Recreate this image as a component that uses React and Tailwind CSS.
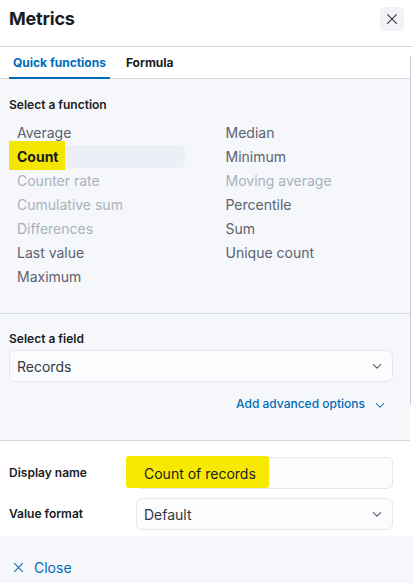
import React from 'react';

const FUNCS = [
    [{ label: 'Average' }, { label: 'Median' }],
    [{ label: 'Count', active: true }, { label: 'Minimum' }],
    [{ label: 'Counter rate', disabled: true }, { label: 'Moving average', disabled: true }],
    [{ label: 'Cumulative sum', disabled: true }, { label: 'Percentile' }],
    [{ label: 'Differences', disabled: true }, { label: 'Sum' }],
    [{ label: 'Last value' }, { label: 'Unique count' }],
    [{ label: 'Maximum' }, null],
];

const Chevron = ({ className = '' }) => (
    <svg width="12" height="12" viewBox="0 0 16 16" className={className} fill="none">
        <path d="M3 6l5 5 5-5" stroke="currentColor" strokeWidth="1.4" strokeLinecap="round" strokeLinejoin="round" />
    </svg>
);

const Cross = ({ size = 14, className = '' }) => (
    <svg width={size} height={size} viewBox="0 0 16 16" className={className} fill="none">
        <path d="M3 3l10 10M13 3L3 13" stroke="currentColor" strokeWidth="1.3" strokeLinecap="round" />
    </svg>
);

const FuncItem = ({ item }) => {
    if (!item) return <div className="h-6" />;
    if (item.active) {
        return (
            <div className="relative h-6 flex items-center">
                <div className="absolute left-0 top-[1px] w-[176px] h-[23px] rounded-md bg-[#eceff5]" />
                <div className="absolute left-0 top-[-3px] w-[56px] h-[29px] bg-[#f3e600]" />
                <span className="relative pl-2 text-[14px] font-bold text-[#1a1c21]">{item.label}</span>
            </div>
        );
    }
    return (
        <div className="h-6 flex items-center">
            <span className={`pl-2 text-[14px] ${item.disabled ? 'text-[#a9b1be]' : 'text-[#5c6270]'}`}>
                {item.label}
            </span>
        </div>
    );
};

const App = () => {
    return (
        <div className="w-[413px] h-[583px] bg-white flex flex-col overflow-hidden" style={{ fontFamily: 'Inter, "Noto Sans", sans-serif' }}>
            {/* header */}
            <div className="h-[47px] shrink-0 flex items-center justify-between pl-[9px] pr-[9px] border-b border-[#d3dae6]">
                <h2 className="text-[18px] font-bold text-[#1a1c21] tracking-[-0.2px] mt-[-9px]">Metrics</h2>
                <button className="w-6 h-6 rounded bg-[#f1f3f6] flex items-center justify-center text-[#343741] mt-[-9px]">
                    <Cross size={14} />
                </button>
            </div>

            <div className="flex flex-1 min-h-0">
                <div className="flex-1 flex flex-col min-w-0">
                    {/* tabs */}
                    <div className="h-[32px] shrink-0 flex items-stretch pl-[9px] gap-4 border-b border-[#d3dae6]">
                        <div className="relative flex items-center px-1">
                            <span className="text-[12px] font-bold text-[#006bb8]">Quick functions</span>
                            <div className="absolute left-0 right-0 bottom-[-1px] h-[2px] bg-[#006bb8]" />
                        </div>
                        <div className="flex items-center">
                            <span className="text-[12px] font-bold text-[#1a1c21]">Formula</span>
                        </div>
                    </div>

                    {/* function section */}
                    <div className="bg-[#f5f7fa] flex flex-col">
                        <div className="pl-[9px] pt-[18px] pr-4 pb-[25px] border-b border-[#d3dae6]">
                            <div className="text-[12px] font-semibold text-[#1a1c21] h-4 flex items-center">Select a function</div>
                            <div className="mt-[7px] grid grid-cols-2 gap-x-[32px]">
                                {FUNCS.map((row, i) => (
                                    <React.Fragment key={i}>
                                        <FuncItem item={row[0]} />
                                        <FuncItem item={row[1]} />
                                    </React.Fragment>
                                ))}
                            </div>
                        </div>

                        {/* field */}
                        <div className="pl-[9px] pr-[17px] pt-[17px] pb-[27px] border-b border-[#d3dae6]">
                            <div className="text-[12px] font-semibold text-[#1a1c21] h-4 flex items-center">Select a field</div>
                            <div className="mt-[3px] h-[32px] rounded-md border border-[#e3e7ee] bg-[#fbfcfd] flex items-center justify-between pl-[7px] pr-[9px]">
                                <span className="text-[14px] text-[#343741]">Records</span>
                                <Chevron className="text-[#343741]" />
                            </div>
                            <div className="mt-[13px] flex justify-end items-center gap-[9px] pr-[7px] text-[#006bb8]">
                                <span className="text-[12px] font-medium">Add advanced options</span>
                                <Chevron className="mt-[1px]" />
                            </div>
                        </div>
                    </div>

                    {/* display */}
                    <div className="bg-white pl-[9px] pr-[17px] pt-[16px] pb-[8px] flex flex-col gap-[9px]">
                        <div className="flex items-center">
                            <span className="w-[127px] text-[12px] font-semibold text-[#1a1c21]">Display name</span>
                            <div className="relative flex-1 h-[32px] rounded-md border border-[#e3e7ee] bg-[#fbfcfd] flex items-center pl-[7px]">
                                <div className="absolute left-[-11px] top-[-2px] w-[143px] h-[32px] bg-[#f7e900] rounded-[3px]" />
                                <span className="relative text-[14px] text-[#1a1c21]">Count of records</span>
                            </div>
                        </div>
                        <div className="flex items-center">
                            <span className="w-[127px] text-[12px] font-semibold text-[#1a1c21]">Value format</span>
                            <div className="flex-1 h-[32px] rounded-md border border-[#e3e7ee] bg-[#fbfcfd] flex items-center justify-between pl-[7px] pr-[9px]">
                                <span className="text-[14px] text-[#343741]">Default</span>
                                <Chevron className="text-[#343741]" />
                            </div>
                        </div>
                    </div>
                </div>

                {/* scroll gutter */}
                <div className="w-[3px] shrink-0 bg-white flex flex-col">
                    <div className="mt-[9px] h-[349px] w-px bg-[#c9ced6]" />
                </div>
            </div>

            {/* footer */}
            <div className="h-[47px] shrink-0 bg-[#f5f7fa] flex items-center gap-[9px] pl-[12px] text-[#006bb8] pt-[16px]">
                <Cross size={13} />
                <span className="text-[14px]">Close</span>
            </div>
        </div>
    );
};

export default App;
